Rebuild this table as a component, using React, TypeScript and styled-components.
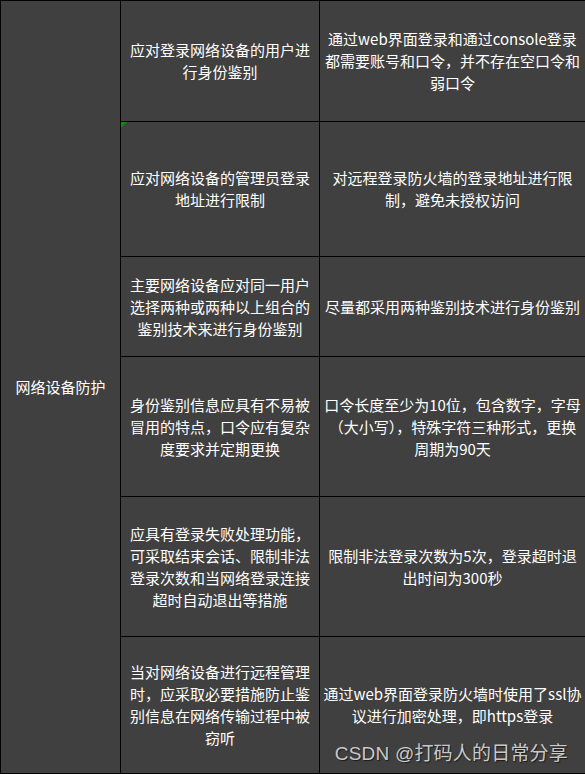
import React from "react";
import styled, { createGlobalStyle } from "styled-components";

const GlobalStyle = createGlobalStyle`
  html, body {
    margin: 0;
    padding: 0;
    background: #404040;
    overflow: hidden;
  }
`;

const Page = styled.div`
  position: relative;
  width: 585px;
  height: 774px;
  overflow: hidden;
  font-family: "Noto Sans CJK SC", "Microsoft YaHei", sans-serif;
  color: #ffffff;
  font-size: 15px;
  line-height: 22px;
`;

const Table = styled.div`
  display: grid;
  grid-template-columns: 120px 199px 266px;
  grid-template-rows: 121px 135px 100px 140px 140px 137px;
  border-top: 1px solid #000;
  border-left: 1px solid #000;
  width: 586px;
  background: #404040;
`;

const Cell = styled.div<{ $col: number; $row: number; $span?: number; $pad?: number }>`
  position: relative;
  display: flex;
  align-items: center;
  justify-content: center;
  text-align: center;
  box-sizing: border-box;
  border-right: 1px solid #000;
  border-bottom: 1px solid #000;
  padding: 0 ${(p) => p.$pad ?? 5}px;
  grid-column: ${(p) => p.$col};
  grid-row: ${(p) => (p.$span ? `${p.$row} / span ${p.$span}` : p.$row)};
  word-break: break-all;
`;

const Marker = styled.span`
  position: absolute;
  left: 0;
  top: 0;
  width: 0;
  height: 0;
  border-top: 6px solid #0a8a0a;
  border-right: 6px solid transparent;
`;

const Watermark = styled.div`
  position: absolute;
  right: 17px;
  bottom: 8px;
  font-family: "Liberation Sans", "Noto Sans CJK SC", sans-serif;
  font-size: 19px;
  letter-spacing: 0.2px;
  line-height: 24px;
  color: #c9c9c9;
  text-shadow: 1px 1px 1px rgba(0, 0, 0, 0.6);
  white-space: nowrap;
`;

const rows: { req: string; impl: string; marker?: boolean }[] = [
  {
    req: "应对登录网络设备的用户进行身份鉴别",
    impl: "通过web界面登录和通过console登录都需要账号和口令，并不存在空口令和弱口令",
  },
  {
    req: "应对网络设备的管理员登录地址进行限制",
    impl: "对远程登录防火墙的登录地址进行限制，避免未授权访问",
    marker: true,
  },
  {
    req: "主要网络设备应对同一用户选择两种或两种以上组合的鉴别技术来进行身份鉴别",
    impl: "尽量都采用两种鉴别技术进行身份鉴别",
  },
  {
    req: "身份鉴别信息应具有不易被冒用的特点，口令应有复杂度要求并定期更换",
    impl: "口令长度至少为10位，包含数字，字母（大小写），特殊字符三种形式，更换周期为90天",
  },
  {
    req: "应具有登录失败处理功能，可采取结束会话、限制非法登录次数和当网络登录连接超时自动退出等措施",
    impl: "限制非法登录次数为5次，登录超时退出时间为300秒",
  },
  {
    req: "当对网络设备进行远程管理时，应采取必要措施防止鉴别信息在网络传输过程中被窃听",
    impl: "通过web界面登录防火墙时使用了ssl协议进行加密处理，即https登录",
  },
];

export default function App() {
  return (
    <>
      <GlobalStyle />
      <Page>
        <Table>
          <Cell $col={1} $row={1} $span={6}>网络设备防护</Cell>
          {rows.map((r, i) => (
            <React.Fragment key={i}>
              <Cell $col={2} $row={i + 1}>
                {r.marker && <Marker />}
                {r.req}
              </Cell>
              <Cell $col={3} $row={i + 1} $pad={2}>
                {r.impl}
              </Cell>
            </React.Fragment>
          ))}
        </Table>
        <Watermark>CSDN @打码人的日常分享</Watermark>
      </Page>
    </>
  );
}
